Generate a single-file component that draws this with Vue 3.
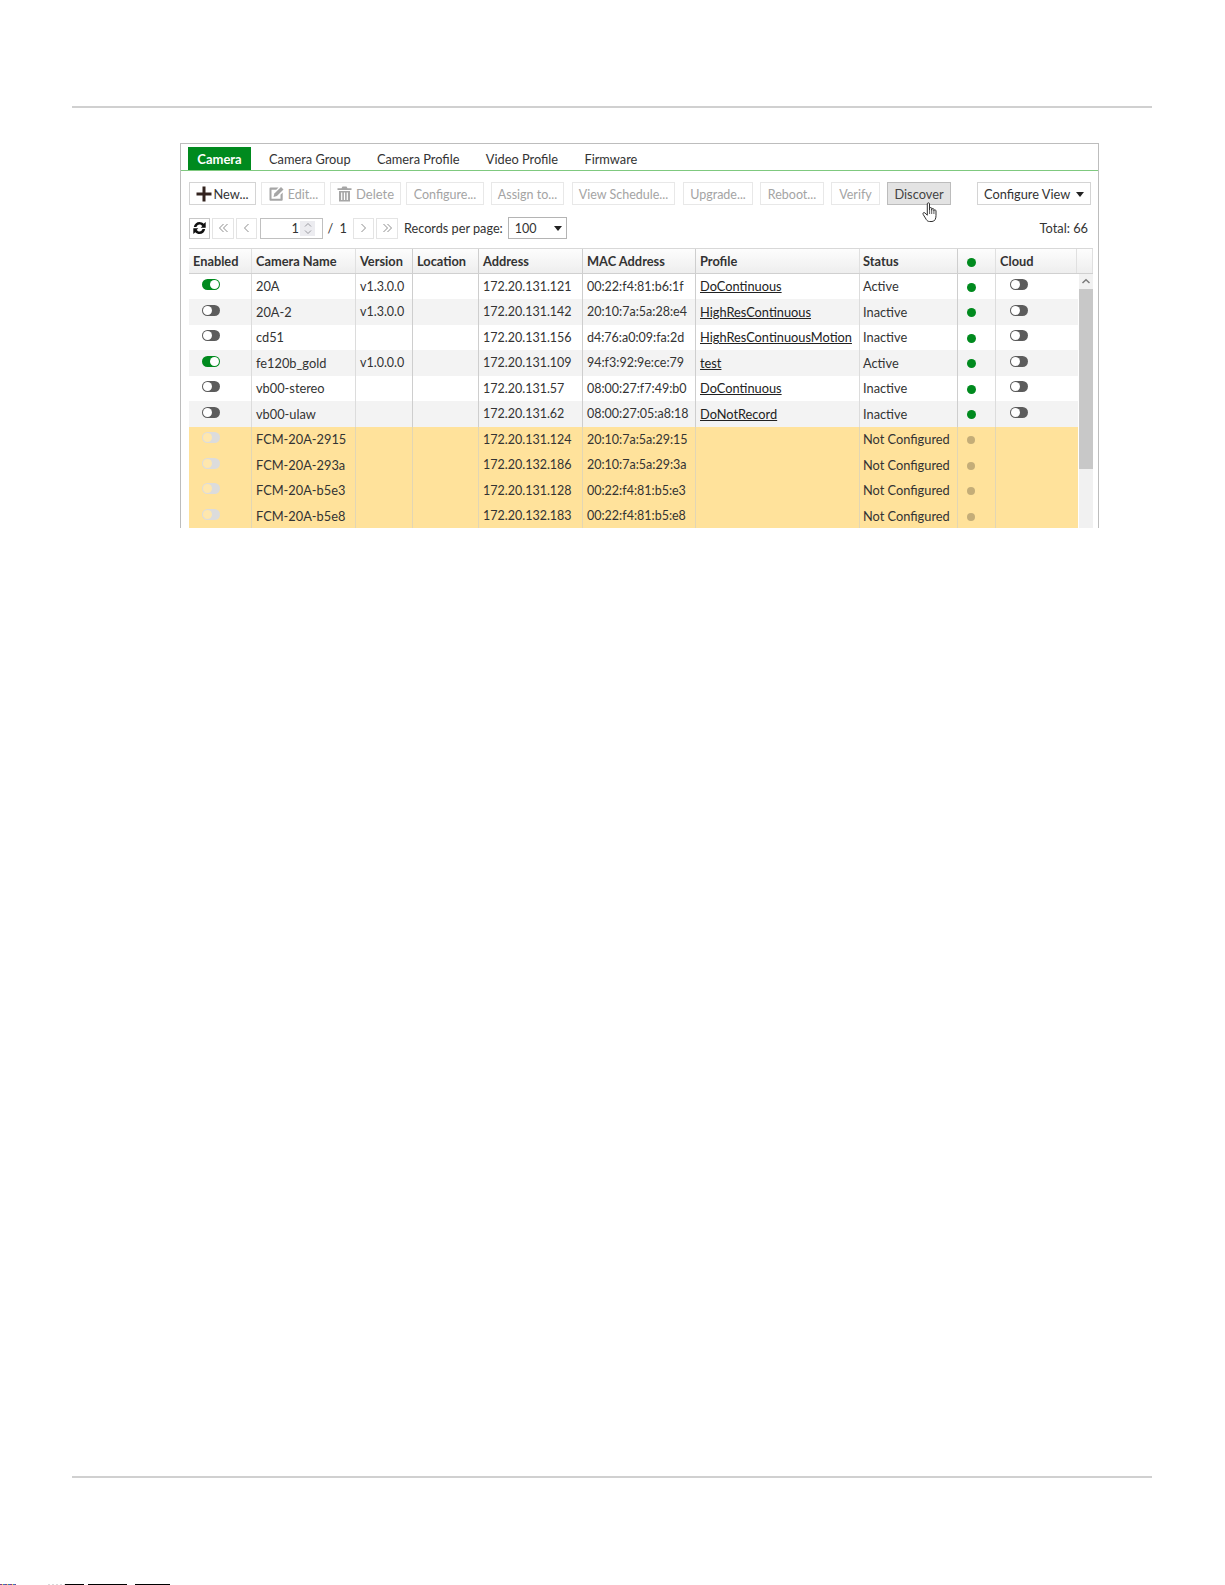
<script setup>
const tabs = ['Camera', 'Camera Group', 'Camera Profile', 'Video Profile', 'Firmware']
const actions = [
  { label: 'Edit...', width: 64, gap: 5, icon: 'edit' },
  { label: 'Delete', width: 71, gap: 5, icon: 'trash' },
  { label: 'Configure...', width: 78, gap: 5 },
  { label: 'Assign to...', width: 73, gap: 7 },
  { label: 'View Schedule...', width: 103, gap: 8 },
  { label: 'Upgrade...', width: 70, gap: 8 },
  { label: 'Reboot...', width: 64, gap: 7 },
  { label: 'Verify', width: 49, gap: 7 },
]
const columns = ['Enabled', 'Camera Name', 'Version', 'Location', 'Address', 'MAC Address', 'Profile', 'Status', '', 'Cloud']
const rows = [
  ['on', '20A', 'v1.3.0.0', '172.20.131.121', '00:22:f4:81:b6:1f', 'DoContinuous', 'Active'],
  ['off', '20A-2', 'v1.3.0.0', '172.20.131.142', '20:10:7a:5a:28:e4', 'HighResContinuous', 'Inactive'],
  ['off', 'cd51', '', '172.20.131.156', 'd4:76:a0:09:fa:2d', 'HighResContinuousMotion', 'Inactive'],
  ['on', 'fe120b_gold', 'v1.0.0.0', '172.20.131.109', '94:f3:92:9e:ce:79', 'test', 'Active'],
  ['off', 'vb00-stereo', '', '172.20.131.57', '08:00:27:f7:49:b0', 'DoContinuous', 'Inactive'],
  ['off', 'vb00-ulaw', '', '172.20.131.62', '08:00:27:05:a8:18', 'DoNotRecord', 'Inactive'],
  ['dim', 'FCM-20A-2915', '', '172.20.131.124', '20:10:7a:5a:29:15', '', 'Not Configured'],
  ['dim', 'FCM-20A-293a', '', '172.20.132.186', '20:10:7a:5a:29:3a', '', 'Not Configured'],
  ['dim', 'FCM-20A-b5e3', '', '172.20.131.128', '00:22:f4:81:b5:e3', '', 'Not Configured'],
  ['dim', 'FCM-20A-b5e8', '', '172.20.132.183', '00:22:f4:81:b5:e8', '', 'Not Configured'],
]
</script>

<template>
  <div class="page">
    <div class="rule"></div>
    <section class="panel">
      <nav class="tabs">
        <span v-for="(t, i) in tabs" :key="t" class="tab" :class="{ active: i === 0 }">{{ t }}</span>
      </nav>
      <div class="toolbar">
        <button class="btn new">
          <svg width="16" height="16" viewBox="0 0 16 16"><path d="M6.500 .5h3v6h6v3h-6v6h-3v-6h-6v-3h6z" fill="#33231f" /></svg>
          <span>New...</span>
        </button>
        <button
          v-for="a in actions"
          :key="a.label"
          class="btn off"
          :style="{ width: a.width + 'px', marginLeft: a.gap + 'px' }"
        >
          <svg v-if="a.icon === 'edit'" width="16" height="16" viewBox="0 0 16 16">
            <path d="M2.500 1.500h8l-2.200 2.200H3.500v9h9V8.800l2.200-2.200v7.100a1 1 0 0 1-1 1H2.500a1 1 0 0 1-1-1V2.500a1 1 0 0 1 1-1z" fill="#a6a6a6" />
            <path d="M5.500 11l.9-3.400L13 1l2.500 2.500-6.600 6.600z" fill="#a6a6a6" />
          </svg>
          <svg v-if="a.icon === 'trash'" width="15" height="16" viewBox="0 0 15 16">
            <path d="M5.500.5h4l1 1.800h4v1.700H.5V2.300h4zM2 5h11v10.500H2z" fill="#a6a6a6" />
            <path d="M4.700 6.500v7.500M7.500 6.500v7.500M10.300 6.500v7.500" stroke="#fff" stroke-width="1.200" />
          </svg>
          <span :class="{ wide: a.label === 'Delete' }">{{ a.label }}</span>
        </button>
        <button class="btn hover">
          Discover
          <svg class="hand" width="16" height="21" viewBox="0 0 16 21">
            <path d="M5.300 1.800c0-1.300 2.200-1.300 2.200 0V8l.1-1.700c.3-1 1.900-1 2.100 0V8.400l.1-1.200c.3-1 1.900-.9 2.100.1v1.500l.1-.4c.4-.9 1.900-.6 2 .4v4.800c0 3.100-1.200 5.900-4 5.900H7.600c-1.500 0-2.400-.6-3.200-1.800L1.200 12.500c-.8-1.300.6-2.600 1.700-1.600l2.400 2.300z" fill="#fff" stroke="#303030" stroke-width="1" stroke-linejoin="round" />
            <path d="M7.600 8v4M9.700 8.400v3.600M11.900 8.800v3.200" stroke="#303030" stroke-width=".8" fill="none" />
          </svg>
        </button>
        <button class="btn view">
          Configure View
          <i class="caret"></i>
        </button>
      </div>
      <div class="pager">
        <button class="pg refresh">
          <svg width="15" height="14" viewBox="0 0 15 14">
            <path d="M1.800 6C2.300 3 4.600 1 7.500 1c1.700 0 3.100.7 4.200 1.800L13.700.9V6.700H8.700l1.600-1.700C9.600 4.100 8.600 3.500 7.500 3.500 6 3.500 4.900 4.500 4.500 6z" fill="#111" />
            <path d="M13.200 8c-.5 3-2.800 5-5.700 5-1.700 0-3.100-.7-4.200-1.800L1.300 13.100V7.300h5L4.700 9c.7.900 1.700 1.500 2.800 1.500 1.500 0 2.600-1 3-2.500z" fill="#111" />
          </svg>
        </button>
        <button class="pg wide-pg gap">
          <svg width="11" height="10" viewBox="0 0 11 10"><path d="M5.500 1L1.500 5l4 4M9.500 1l-4 4 4 4" fill="none" stroke="#8e8e8e" stroke-width="1" /></svg>
        </button>
        <button class="pg gap">
          <svg width="7" height="10" viewBox="0 0 7 10"><path d="M5.500 1L1.500 5l4 4" fill="none" stroke="#8e8e8e" stroke-width="1" /></svg>
        </button>
        <div class="page-input">
          <span>1</span>
          <span class="spin">
            <svg width="8" height="13" viewBox="0 0 8 13"><path d="M1 4.500L4 1.500l3 3M1 8.500l3 3 3-3" fill="none" stroke="#9a9aa0" stroke-width="1" /></svg>
          </span>
        </div>
        <span class="of">/ 1</span>
        <button class="pg">
          <svg width="7" height="10" viewBox="0 0 7 10"><path d="M1.500 1l4 4-4 4" fill="none" stroke="#8e8e8e" stroke-width="1" /></svg>
        </button>
        <button class="pg wide-pg gap">
          <svg width="11" height="10" viewBox="0 0 11 10"><path d="M1.500 1l4 4-4 4M5.500 1l4 4-4 4" fill="none" stroke="#8e8e8e" stroke-width="1" /></svg>
        </button>
        <span class="rpp">Records per page:</span>
        <div class="select"><span>100</span><i class="caret"></i></div>
        <span class="total">Total: 66</span>
      </div>
      <div class="table">
        <div class="tr head">
          <div v-for="(c, i) in columns" :key="i" class="td">
            <template v-if="c">{{ c }}</template>
            <i v-else class="dot"></i>
          </div>
          <div class="td"></div>
        </div>
        <div class="body">
          <div class="rows">
            <div v-for="(r, i) in rows" :key="r[1]" class="tr" :class="{ alt: i % 2 === 1 && r[0] !== 'dim', warn: r[0] === 'dim' }">
              <div class="td center"><i class="toggle" :class="r[0]"></i></div>
              <div class="td">{{ r[1] }}</div>
              <div class="td mono">{{ r[2] }}</div>
              <div class="td"></div>
              <div class="td mono">{{ r[3] }}</div>
              <div class="td mono">{{ r[4] }}</div>
              <div class="td"><a>{{ r[5] }}</a></div>
              <div class="td">{{ r[6] }}</div>
              <div class="td"><i class="dot" :class="{ muted: r[0] === 'dim' }"></i></div>
              <div class="td cloud"><i v-if="r[0] !== 'dim'" class="toggle off"></i></div>
            </div>
          </div>
          <div class="scroll">
            <svg class="up" width="10" height="7" viewBox="0 0 10 7"><path d="M1.500 5L5 1.800 8.500 5" fill="none" stroke="#7a7a7a" stroke-width="1.500" /></svg>
            <div class="thumb"></div>
          </div>
        </div>
      </div>
    </section>
    <div class="rule bottom"></div>
    <div class="strip"></div>
  </div>
</template>

<style scoped>
.page {
  position: relative;
  width: 1225px;
  height: 1585px;
  padding-top: 106px;
  box-sizing: border-box;
  background: #fff;
  overflow: hidden;
  font-family: Lato, "Open Sans", sans-serif;
  font-size: 12.8px;
  color: #333;
}
.rule {
  height: 2px;
  margin: 0 73px 0 72px;
  background: #d0d0d0;
}
.rule.bottom {
  margin-top: 948px;
}
.strip {
  position: absolute;
  left: 0;
  bottom: 0;
  width: 170px;
  height: 1px;
  background:
    linear-gradient(90deg, transparent 0 65px, #000 65px 84px, transparent 84px 88px, #000 88px 127px, transparent 127px 135px, #000 135px 170px),
    repeating-linear-gradient(90deg, #7a3f8f 0 2px, #e8c84a 2px 3px, #3a7abf 3px 5px) 0 0 / 16px 1px no-repeat,
    repeating-linear-gradient(90deg, #d9d9d9 0 2px, #fff 2px 4px) 48px 0 / 17px 1px no-repeat;
}
.panel {
  width: 919px;
  height: 385px;
  margin: 35px 0 0 180px;
  box-sizing: border-box;
  border: solid #bdbdbd;
  border-width: 1px 1px 0 1px;
  overflow: hidden;
}
.tabs {
  display: flex;
  height: 27px;
  padding: 3px 0 0 7px;
  box-sizing: border-box;
  border-bottom: 1px solid #7fc97f;
}
.tab {
  display: flex;
  align-items: center;
  padding: 0 9px;
  margin-left: 8.300px;
  color: #333;
}
.tab.active {
  width: 63px;
  box-sizing: border-box;
  padding: 0;
  margin-left: 0;
  justify-content: center;
  background: #008a1e;
  color: #fff;
  font-weight: 700;
  font-size: 13px;
}
.tab.active + .tab {
  margin-left: 9px;
}
.toolbar {
  position: relative;
  display: flex;
  height: 23px;
  margin: 11px 0 0 8px;
}
button {
  font: inherit;
  margin: 0;
  padding: 0;
}
.btn {
  position: relative;
  display: flex;
  align-items: center;
  justify-content: center;
  gap: 4px;
  height: 23px;
  padding-top: 1px;
  box-sizing: border-box;
  background: #fff;
  border: 1px solid #dcdcdc;
  color: #333;
  white-space: nowrap;
}
.btn.new {
  width: 67px;
  gap: 1px;
  border-color: #d4d4d4;
}
.btn.off {
  font-size: 12.5px;
  color: #a4a4a4;
  border-color: #e8e8e8;
}
.wide {
  font-size: 13px;
}
.btn.hover {
  width: 64px;
  margin-left: 7px;
  background: #e3e3e3;
  border-color: #bcbcbc;
  color: #444;
}
.hand {
  position: absolute;
  left: 34px;
  top: 19px;
}
.btn.view {
  width: 114px;
  margin-left: 26px;
  justify-content: flex-start;
  padding-left: 6px;
  gap: 6px;
  border-color: #d4d4d4;
}
.caret {
  display: inline-block;
  width: 0;
  height: 0;
  border: 4.500px solid transparent;
  border-top: 5px solid #222;
  border-bottom: 0;
}
.pager {
  display: flex;
  align-items: center;
  height: 22px;
  margin: 12px 10px 0 8px;
}
.pg {
  display: flex;
  align-items: center;
  justify-content: center;
  width: 21px;
  height: 21px;
  box-sizing: border-box;
  background: #fff;
  border: 1px solid #e4e4e4;
}
.wide-pg {
  width: 22px;
}
.gap {
  margin-left: 2px;
}
.refresh {
  border-color: #c8c8c8;
}
.page-input {
  display: flex;
  align-items: center;
  justify-content: flex-end;
  gap: 1px;
  width: 63px;
  height: 21px;
  margin-left: 3px;
  box-sizing: border-box;
  border: 1px solid #c0c0c0;
  padding-right: 7px;
}
.spin {
  display: flex;
  align-items: center;
  justify-content: center;
  width: 15px;
  height: 15px;
  background: #ececf0;
}
.of {
  margin-left: 4.500px;
  width: 25.500px;
  word-spacing: 3px;
}
.rpp {
  margin-left: 6px;
  font-size: 12.7px;
  white-space: nowrap;
}
.select {
  display: flex;
  align-items: center;
  justify-content: space-between;
  width: 59px;
  height: 22px;
  margin-left: 5px;
  padding: 0 4px 0 6px;
  box-sizing: border-box;
  border: 1px solid #b4b4b4;
  font-size: 12.5px;
}
.total {
  margin-left: auto;
}
.table {
  margin: 9px 0 0 8px;
  width: 904px;
}
.tr {
  display: grid;
  grid-template-columns: 63px 104px 57px 66px 104px 113px 164px 98px 38px 82px;
  height: 25.5px;
}
.tr.head {
  grid-template-columns: 63px 104px 57px 66px 104px 113px 164px 98px 38px 81px 16px;
  box-sizing: border-box;
  border-top: 1px solid #d8d8d8;
  border-bottom: 1px solid #d0d0d0;
  background: linear-gradient(#fdfdfd, #eeeeee);
  font-weight: 700;
}
.td {
  display: flex;
  align-items: center;
  padding: 0 0 0 4px;
  box-sizing: border-box;
  border-right: 1px solid #dcdcdc;
  white-space: nowrap;
  overflow: hidden;
}
.mono {
  font-size: 12.5px;
}
.head .td {
  padding-top: 1px;
  border-right-color: #e0e0e0;
}
.td:nth-child(8) {
  padding-left: 3px;
}
.td:nth-child(3),
.td:nth-child(4),
.td:nth-child(5),
.td:nth-child(6),
.td:nth-child(8) {
  border-right-color: #cecece;
}
.td:nth-child(9) {
  padding-left: 9px;
}
.td.center {
  padding: 0 0 3px 13px;
}
.td.cloud {
  padding: 0 0 3px 14px;
  border-right: 0;
}
.alt {
  background: #f3f3f3;
}
.warn {
  background: #ffe29b;
}
.warn .td {
  border-right-color: #e2d6b4;
}
a {
  color: #222;
  text-decoration: underline;
}
.dot {
  display: inline-block;
  width: 9px;
  height: 9px;
  margin-top: 2px;
  border-radius: 50%;
  background: #008a1e;
}
.dot.muted {
  width: 8px;
  height: 8px;
  background: #c4ad78;
}
.toggle {
  position: relative;
  display: block;
  width: 18px;
  height: 11px;
  border-radius: 6px;
  background: #5c5c5c;
}
.toggle::after {
  content: "";
  position: absolute;
  top: 1px;
  left: 1px;
  width: 9px;
  height: 9px;
  border-radius: 50%;
  background: #fff;
}
.toggle.on {
  background: #008a1e;
}
.toggle.on::after {
  left: auto;
  right: 1px;
}
.toggle.dim {
  background: #dcdcdc;
}
.toggle.dim::after {
  background: #ffe7ad;
}
.body {
  display: flex;
  position: relative;
}
.rows {
  flex: none;
  width: 889px;
}
.scroll {
  position: relative;
  width: 14px;
  margin-left: 1px;
  background: #f1f1f1;
}
.up {
  position: absolute;
  top: 4px;
  left: 2px;
}
.thumb {
  position: absolute;
  top: 15px;
  left: 0;
  right: 0;
  height: 180px;
  background: #c8c8c8;
}
</style>
